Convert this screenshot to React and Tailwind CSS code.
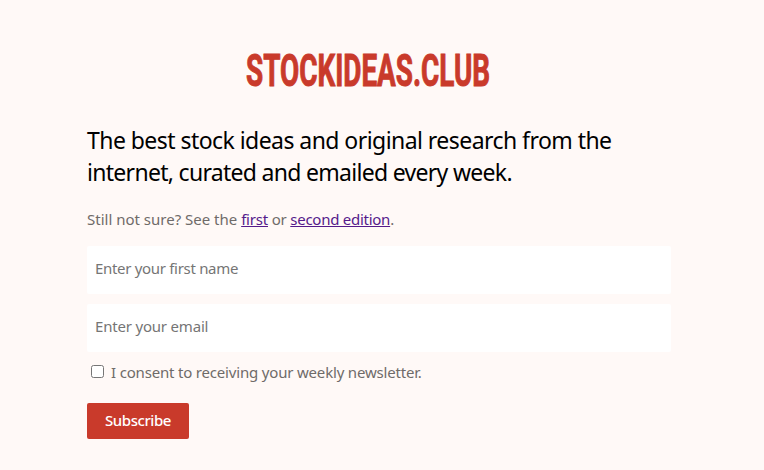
import React from 'react';

function Logo() {
  return (
    <div className="flex h-[50px] pl-[159px] whitespace-nowrap">
      <span className="origin-left scale-x-[0.626] font-['Roboto',sans-serif] text-[44.5px] leading-[53px] font-bold text-[#c93a2b] [-webkit-text-stroke:1px_#c93a2b]">
        STOCKIDEAS.CLUB
      </span>
    </div>
  );
}

export default function App() {
  return (
    <div className="h-[470px] overflow-hidden bg-[#fff9f7] pt-[45px] pl-[87px] font-['Noto_Sans',sans-serif] text-[15px] text-[#6f6b69]">
      <div className="w-[584px]">
        <Logo />

        <h1 className="mt-[29px] text-[23px] leading-8 whitespace-nowrap text-black">
          <span className="tracking-[-0.55px]">The best stock ideas and original research from the</span>
          <br />
          <span className="tracking-[-0.7px]">internet, curated and emailed every week.</span>
        </h1>

        <p className="mt-[19px] leading-6 whitespace-nowrap">
          Still not sure? See the{' '}
          <a href="#first" className="tracking-[-0.2px] text-[#551a8b] underline">first</a>
          <span className="tracking-[-0.2px]"> or </span>
          <a href="#second" className="tracking-[-0.26px] text-[#551a8b] underline">second edition</a>.
        </p>

        <form className="mt-[15px]">
          <input
            type="text"
            placeholder="Enter your first name"
            className="mb-[10px] block h-12 w-full rounded-xs bg-white px-2 pb-[5px] tracking-[-0.31px] placeholder:text-[#757575]"
          />
          <input
            type="email"
            placeholder="Enter your email"
            className="block h-12 w-full rounded-xs bg-white px-2 pb-[5px] tracking-[-0.19px] placeholder:text-[#757575]"
          />
          <label className="mt-2 flex h-6 items-center tracking-[-0.18px] whitespace-nowrap">
            <input
              type="checkbox"
              className="mr-[7px] mb-[2px] ml-1 size-[13px] appearance-none rounded-[2.5px] border border-[#767676] bg-white"
            />
            I consent to receiving your weekly newsletter.
          </label>
          <button
            type="button"
            className="mt-[19px] block h-9 w-[102px] rounded-xs bg-[#c93a2b] pb-[2px] font-medium tracking-[-0.45px] text-white"
          >
            Subscribe
          </button>
        </form>
      </div>
    </div>
  );
}
